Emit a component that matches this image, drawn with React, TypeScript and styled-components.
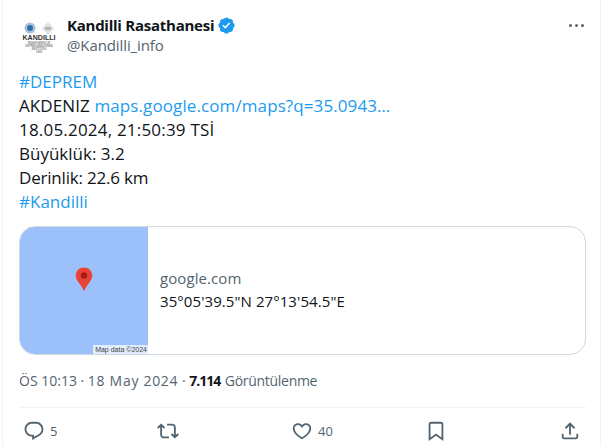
import React from 'react'
import styled, { createGlobalStyle } from 'styled-components'

const GlobalStyle = createGlobalStyle`
  html, body {
    margin: 0;
    padding: 0;
    background: #fff;
  }
  body {
    font-family: 'Open Sans', 'Noto Sans', sans-serif;
    color: #0f1419;
  }
`

const ICONS = {
  reply: 'M1.751 10c0-4.42 3.584-8 8.005-8h4.366c4.49 0 8.129 3.64 8.129 8.13 0 2.96-1.607 5.68-4.196 7.11l-8.054 4.46v-3.69h-.067c-4.49.1-8.183-3.51-8.183-8.01zm8.005-6c-3.317 0-6.005 2.69-6.005 6 0 3.37 2.77 6.08 6.138 6.01l.351-.01h1.761v2.3l5.087-2.81c1.951-1.08 3.163-3.13 3.163-5.36 0-3.39-2.744-6.13-6.129-6.13H9.756z',
  retweet: 'M4.5 3.88l4.432 4.14-1.364 1.46L5.5 7.55V16c0 1.1.896 2 2 2H13v2H7.5c-2.209 0-4-1.79-4-4V7.55L1.432 9.48.068 8.02 4.5 3.88zM16.5 6H11V4h5.5c2.209 0 4 1.79 4 4v8.45l2.068-1.93 1.364 1.46-4.432 4.14-4.432-4.14 1.364-1.46 2.068 1.93V8c0-1.1-.896-2-2-2z',
  like: 'M16.697 5.5c-1.222-.06-2.679.51-3.89 2.16l-.805 1.09-.806-1.09C9.984 6.01 8.526 5.44 7.304 5.5c-1.243.07-2.349.78-2.91 1.91-.552 1.12-.633 2.78.479 4.82 1.074 1.97 3.257 4.27 7.129 6.61 3.87-2.34 6.052-4.64 7.126-6.61 1.111-2.04 1.03-3.7.477-4.82-.561-1.13-1.666-1.84-2.908-1.91zm4.187 7.69c-1.351 2.48-4.001 5.12-8.379 7.67l-.503.3-.504-.3c-4.379-2.55-7.029-5.19-8.382-7.67-1.36-2.5-1.41-4.86-.514-6.67.887-1.79 2.647-2.91 4.601-3.01 1.651-.09 3.368.56 4.798 2.01 1.429-1.45 3.146-2.1 4.796-2.01 1.954.1 3.714 1.22 4.601 3.01.896 1.81.846 4.17-.514 6.67z',
  bookmark: 'M4 4.5C4 3.12 5.119 2 6.5 2h11C18.881 2 20 3.12 20 4.5v18.44l-8-5.71-8 5.71V4.5zM6.5 4c-.276 0-.5.22-.5.5v14.56l6-4.29 6 4.29V4.5c0-.28-.224-.5-.5-.5h-11z',
  share: 'M12 2.59l5.7 5.7-1.41 1.42L13 6.41V16h-2V6.41l-3.3 3.3-1.41-1.42L12 2.59zM21 15l-.02 3.51c0 1.38-1.12 2.49-2.5 2.49H5.5C4.11 21 3 19.88 3 18.5V15h2v3.5c0 .28.22.5.5.5h12.98c.28 0 .5-.22.5-.5L19 15h2z',
  verified: 'M22.25 12c0-1.43-.88-2.67-2.19-3.34.46-1.39.2-2.9-.81-3.91s-2.52-1.27-3.91-.81c-.66-1.31-1.91-2.19-3.34-2.19s-2.67.88-3.33 2.19c-1.4-.46-2.91-.2-3.92.81s-1.26 2.52-.8 3.91c-1.31.67-2.2 1.91-2.2 3.34s.89 2.67 2.2 3.34c-.46 1.39-.21 2.9.8 3.91s2.52 1.26 3.91.81c.67 1.31 1.91 2.19 3.34 2.19s2.68-.88 3.34-2.19c1.39.45 2.9.2 3.91-.81s1.27-2.52.81-3.91c1.31-.67 2.19-1.91 2.19-3.34zm-11.71 4.2L6.8 12.46l1.41-1.42 2.26 2.26 4.8-5.23 1.47 1.36-6.2 6.77z',
}

const Icon = ({ name, size = 22, color = '#536471' }: { name: keyof typeof ICONS; size?: number; color?: string }) => (
  <svg width={size} height={size} viewBox='0 0 24 24' fill={color} style={{ flexShrink: 0 }}>
    <path d={ICONS[name]} />
  </svg>
)

const LOGO_LINES = [
  { y: 27, text: 'RASATHANESİ VE' },
  { y: 30, text: 'DEPREM ARAŞTIRMA' },
  { y: 33, text: 'ENSTİTÜSÜ' },
  { y: 36, text: '1868' },
]

const Logo = () => (
  <svg width='40' height='40' viewBox='0 0 40 40' fontFamily='Liberation Sans, sans-serif' textAnchor='middle'>
    <circle cx='11' cy='11' r='5.5' fill='#aac2dc' />
    <circle cx='11' cy='11' r='3' fill='#2f6fb0' />
    <path d='M29 5l6 6.500-6 6-6-6z' fill='#e0e0e0' />
    <path d='M26 10h6v3h-6z' fill='#b5b5b5' />
    <text x='20' y='22.500' fontSize='7' fontWeight='700' fill='#333' textLength='33' lengthAdjust='spacingAndGlyphs'>KANDILLI</text>
    {LOGO_LINES.map((l) => (
      <text key={l.y} x='20' y={l.y} fontSize='2.600' fontWeight='700' fill='#888'>{l.text}</text>
    ))}
  </svg>
)

const Pin = () => (
  <svg width='18' height='25' viewBox='0 0 18 25'>
    <path d='M9 .5C4.4.5.8 4 .8 8.6c0 3.2 1.5 5.2 3.6 8 1.9 2.5 3.6 5 4.6 8 1-3 2.7-5.500 4.600-8 2.100-2.800 3.600-4.800 3.600-8C17.200 4 13.600.5 9 .5z' fill='#ea4335' />
    <circle cx='9' cy='8.500' r='3.200' fill='#a61b14' />
  </svg>
)

const Article = styled.article`
  box-sizing: border-box;
  width: 599px;
  height: 446px;
  margin-left: 2px;
  padding: 0 14px 0 16px;
  border-left: 1px solid #eff3f4;
  border-right: 1px solid #eff3f4;
  overflow: hidden;
`

const Header = styled.header`
  display: flex;
  align-items: flex-start;
  height: 57px;
  padding-top: 13px;
  box-sizing: border-box;
`

const Avatar = styled.div`
  width: 40px;
  height: 40px;
  margin: 4px 8px 0 0;
  flex-shrink: 0;
  svg { display: block; }
`

const Names = styled.div`
  flex: 1;
`

const NameRow = styled.div`
  display: flex;
  align-items: center;
  gap: 3px;
  height: 24px;
`

const DisplayName = styled.span`
  font-size: 15px;
  font-weight: 700;
  line-height: 24px;
  letter-spacing: -0.25px;
`

const Handle = styled.div`
  font-size: 15px;
  line-height: 20px;
  color: #536471;
  letter-spacing: -0.1px;
  margin-top: -2px;
`

const More = styled.div`
  display: flex;
  gap: 3px;
  margin: 11px 2px 0 0;
`

const Dot = styled.span`
  width: 3px;
  height: 3px;
  border-radius: 50%;
  background: #536471;
`

const Body = styled.div`
  margin-top: 13px;
  font-size: 17px;
  line-height: 24px;
`

const Line = styled.div<{ $spacing?: number }>`
  white-space: nowrap;
  letter-spacing: ${(p) => p.$spacing ?? 0}px;
`

const Link = styled.span`
  color: #1d9bf0;
`

const Card = styled.div`
  display: flex;
  height: 129px;
  margin-top: 12px;
  border: 1px solid #cfd9de;
  border-radius: 16px;
  overflow: hidden;
  box-sizing: border-box;
`

const MapThumb = styled.div`
  position: relative;
  display: flex;
  align-items: center;
  justify-content: center;
  width: 128px;
  flex-shrink: 0;
  background: #9cc0f9;
  svg { margin-bottom: 23px; }
`

const MapData = styled.span`
  position: absolute;
  right: 0;
  bottom: 0;
  padding: 0 1px 0 2px;
  background: rgba(255, 255, 255, 0.7);
  font-family: 'Liberation Sans', sans-serif;
  font-size: 7px;
  line-height: 9px;
  color: #444;
`

const CardText = styled.div`
  display: flex;
  flex-direction: column;
  justify-content: center;
  padding: 0 0 1px 12px;
  font-size: 15px;
  line-height: 23px;
  letter-spacing: 0.08px;
`

const Domain = styled.div`
  color: #536471;
`

const Meta = styled.div`
  margin-top: 16px;
  font-size: 14px;
  line-height: 20px;
  color: #536471;
  white-space: nowrap;
`

const MetaDate = styled.span`
  letter-spacing: 0.7px;
`

const Views = styled.strong`
  color: #0f1419;
  font-weight: 700;
  letter-spacing: -1px;
  margin-right: 1px;
`

const ViewsLabel = styled.span`
  letter-spacing: -0.3px;
`

const Divider = styled.div`
  height: 1px;
  margin-top: 16px;
  background: #eff3f4;
`

const Actions = styled.div`
  display: grid;
  grid-template-columns: repeat(5, 134px);
  margin-top: 11px;
  padding-left: 4px;
`

const Action = styled.div`
  display: flex;
  align-items: center;
  gap: 5px;
  height: 24px;
  font-size: 13px;
  color: #536471;
`

export default function App() {
  return (
    <>
      <GlobalStyle />
      <Article>
        <Header>
          <Avatar><Logo /></Avatar>
          <Names>
            <NameRow>
              <DisplayName>Kandilli Rasathanesi</DisplayName>
              <Icon name='verified' size={19} color='#1d9bf0' />
            </NameRow>
            <Handle>@Kandilli_info</Handle>
          </Names>
          <More><Dot /><Dot /><Dot /></More>
        </Header>
        <Body>
          <Line><Link>#DEPREM</Link></Line>
          <Line $spacing={0.1}>AKDENIZ <Link>maps.google.com/maps?q=35.0943…</Link></Line>
          <Line $spacing={0.2}>18.05.2024, 21:50:39 TSİ</Line>
          <Line>Büyüklük: 3.2</Line>
          <Line $spacing={-0.2}>Derinlik: 22.6 km</Line>
          <Line><Link>#Kandilli</Link></Line>
        </Body>
        <Card>
          <MapThumb>
            <Pin />
            <MapData>Map data ©2024</MapData>
          </MapThumb>
          <CardText>
            <Domain>google.com</Domain>
            <div>35°05'39.5"N 27°13'54.5"E</div>
          </CardText>
        </Card>
        <Meta>ÖS 10:13 · <MetaDate>18 May 2024</MetaDate> · <Views>7.114</Views> <ViewsLabel>Görüntülenme</ViewsLabel></Meta>
        <Divider />
        <Actions>
          <Action><Icon name='reply' />5</Action>
          <Action><Icon name='retweet' /></Action>
          <Action><Icon name='like' />40</Action>
          <Action><Icon name='bookmark' /></Action>
          <Action><Icon name='share' /></Action>
        </Actions>
      </Article>
    </>
  )
}
